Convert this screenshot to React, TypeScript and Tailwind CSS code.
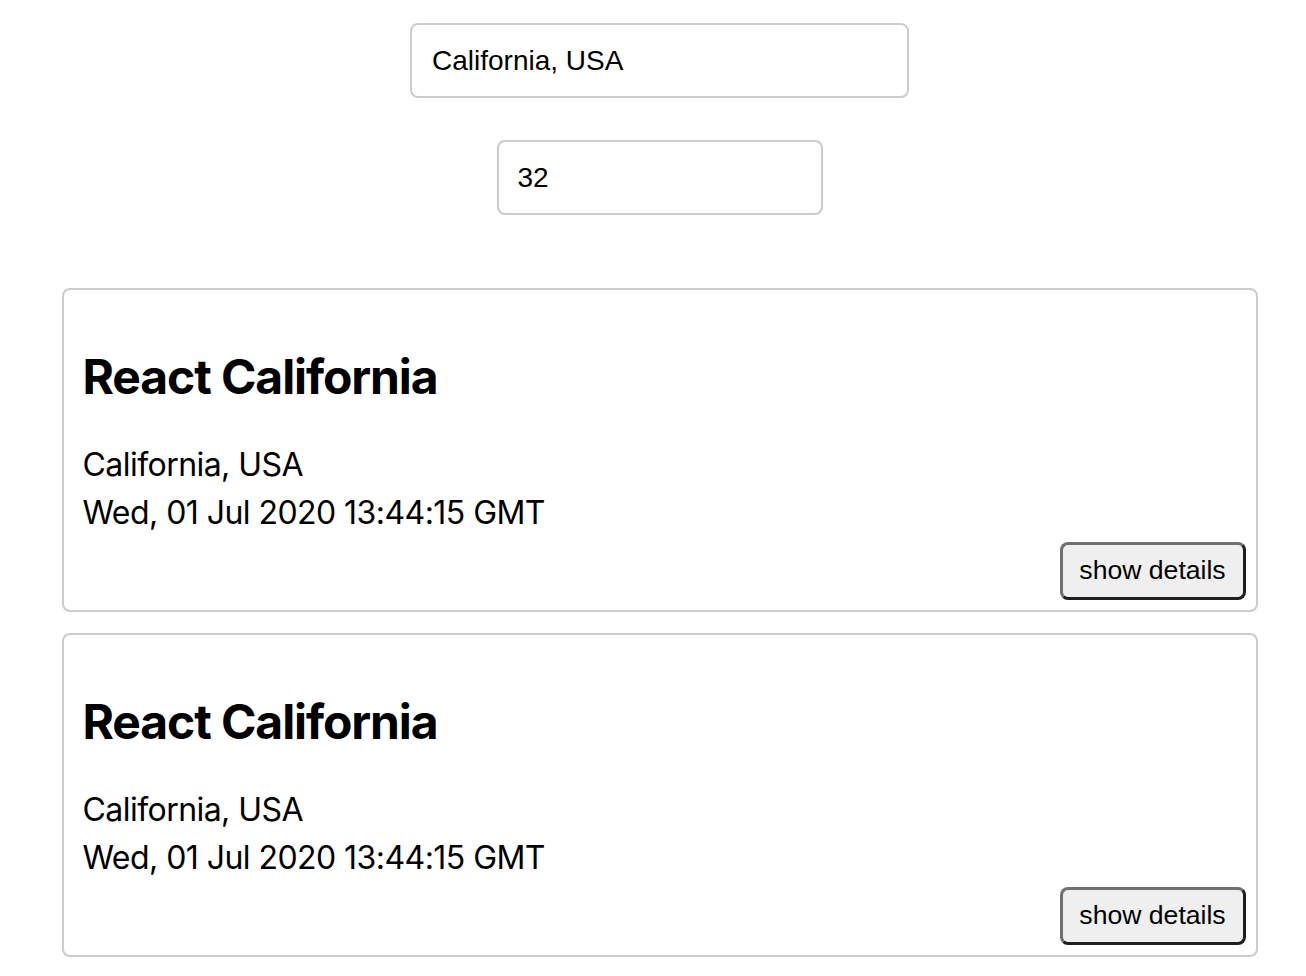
import React from 'react';

const events = [
  { id: 1, name: 'React California', location: 'California, USA', date: 'Wed, 01 Jul 2020 13:44:15 GMT' },
  { id: 2, name: 'React California', location: 'California, USA', date: 'Wed, 01 Jul 2020 13:44:15 GMT' },
];

function EventCard({ name, location, date }: { name: string; location: string; date: string }) {
  return (
    <div className="w-[1196px] h-[324px] border-2 border-[#cccccc] rounded-[8px] px-[19px] pt-[58px] pb-[10px] flex flex-col font-['Inter',sans-serif] text-black">
      <h2 className="text-[48px] leading-[58px] font-bold tracking-[-1.1px]">{name}</h2>
      <p className="mt-[35px] text-[32px] leading-[48px] tracking-[-0.55px]">{location}</p>
      <p className="text-[32px] leading-[48px] tracking-[-0.55px]">{date}</p>
      <div className="mt-auto flex justify-end -mr-[9px]">
        <button className="w-[186px] h-[58px] rounded-[8px] border-[3px] border-[#707070] border-b-[#1f1f1f] border-r-[#1f1f1f] bg-[#efefef] text-[26.6px] font-['Liberation_Sans',sans-serif] text-black">
          show details
        </button>
      </div>
    </div>
  );
}

export default function App() {
  return (
    <div className="min-h-screen bg-white pl-[13px] pt-[23px] flex flex-col items-center">
      <input
        className="w-[499px] h-[75px] border-2 border-[#cccccc] rounded-[8px] px-[20px] text-[28px] font-['Liberation_Sans',sans-serif] text-black outline-none"
        defaultValue="California, USA"
      />
      <input
        className="mt-[42px] w-[326px] h-[75px] border-2 border-[#cccccc] rounded-[8px] px-[19px] text-[28px] font-['Liberation_Sans',sans-serif] text-black outline-none"
        defaultValue="32"
      />
      <div className="mt-[73px] flex flex-col gap-[21px]">
        {events.map(e => (
          <EventCard key={e.id} name={e.name} location={e.location} date={e.date} />
        ))}
      </div>
    </div>
  );
}
